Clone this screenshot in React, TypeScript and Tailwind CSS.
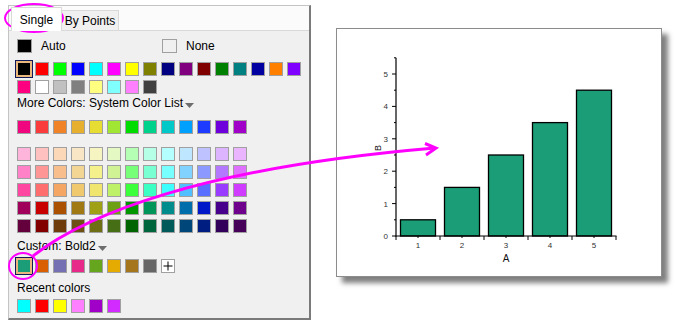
import React from 'react';

const row1 = ['#000000', '#ff0000', '#00ff00', '#0000ff', '#00ffff', '#ff00ff', '#ffff00', '#808000', '#000080', '#800080', '#800000', '#008000', '#008080', '#0000a0', '#ff8000', '#8000ff'];
const row2 = ['#ff0080', '#ffffff', '#c0c0c0', '#808080', '#ffff80', '#80ffff', '#ff80ff', '#404040'];
const systemRow = ['#f0077f', '#fa3c3c', '#f08228', '#e6af2d', '#e6dc32', '#a0e632', '#00dc00', '#00d28c', '#00c8c8', '#00a0ff', '#1e3cff', '#6e00dc', '#a000c8'];
const shades = [
  ['#ffb4dc', '#ffc0c0', '#fcd8b8', '#f8e6c4', '#f6f4c0', '#e4f8c4', '#b4ffb4', '#b4ffe6', '#b4ffff', '#bee6ff', '#bec3ff', '#dcb4ff', '#ebb4ff'],
  ['#ff82c8', '#ff9696', '#f8be8c', '#f4d694', '#f4f08c', '#d0f294', '#78ff78', '#78ffd2', '#78ffff', '#82d2ff', '#8c9aff', '#b478ff', '#e070ff'],
  ['#ff46a0', '#ff6e6e', '#f5a564', '#f0c86e', '#f0e66e', '#bef068', '#3cff3c', '#3cffc3', '#3cffff', '#50bfff', '#5a6eff', '#9a3cff', '#d03cff'],
  ['#a0005a', '#c80000', '#aa5000', '#a07814', '#a0a014', '#6ea014', '#009600', '#00965a', '#008c8c', '#006eaa', '#0019c8', '#46008c', '#6e008c'],
  ['#64003c', '#820000', '#6e3c0a', '#6e5014', '#6e6e14', '#466e14', '#006400', '#00643c', '#005a5a', '#004678', '#001e82', '#32005a', '#46005a'],
];
const bold2 = ['#1b9e77', '#d95f02', '#7570b3', '#e7298a', '#66a61e', '#e6ab02', '#a6761d', '#666666'];
const recent = ['#00ffff', '#ff0000', '#ffff00', '#ff80ff', '#a000c8', '#d22bff'];

const Swatch = ({ color, selected }: { color: string; selected?: boolean }) => (
  <div
    className={
      selected
        ? 'w-[14px] h-[14px] border border-[#eab77c] shadow-[0_0_0_1px_#eab77c,0_0_0_2px_#10195c]'
        : 'w-[14px] h-[14px] border border-[#a0a0a0]'
    }
    style={{ backgroundColor: color }}
  />
);

const SwatchRow = ({ colors, selectedIndex }: { colors: string[]; selectedIndex?: number }) => (
  <div className="flex gap-[4px]">
    {colors.map((c, i) => (
      <Swatch key={i} color={c} selected={i === selectedIndex} />
    ))}
  </div>
);

const DropArrow = () => (
  <svg width="9" height="5" viewBox="0 0 9 5" className="ml-[2px] mt-[4px]">
    <path d="M0 0 H9 L4.5 5 Z" fill="#6d6d6d" />
  </svg>
);

const Label = ({ text, arrow }: { text: string; arrow?: boolean }) => (
  <div className="flex items-center h-[18px] text-[12px] leading-[18px] text-black">
    <span>{text}</span>
    {arrow && <DropArrow />}
  </div>
);

const ColorPanel = () => (
  <div className="mt-[5px] ml-[8px] w-[303px] h-[315px] flex flex-col border-l border-t border-[#c4c4c4] border-r-2 border-b-2 border-r-[#7a7a7a] border-b-[#7a7a7a]">
    <div className="h-[24px] flex items-end pl-[2px] bg-[#fbfbfb] text-[12px] text-black">
      <div className="relative z-10 -mb-[1px] w-[51px] h-[24px] bg-white border border-b-0 border-[#d9d9d9] flex items-center justify-center">
        Single
      </div>
      <div className="w-[57px] h-[20px] bg-[#f0f0f0] border border-l-0 border-b-0 border-[#d9d9d9] flex items-center justify-center">
        By Points
      </div>
    </div>
    <div className="flex-1 border-t border-[#d9d9d9] bg-[#f0f0f0] pl-[8px] flex flex-col">
      <div className="mt-[8px] flex items-center h-[14px] text-[12px] text-black">
        <div className="w-[145px] flex items-center gap-[9px]">
          <div className="w-[15px] h-[14px] bg-black border border-[#a0a0a0]" />
          <span>Auto</span>
        </div>
        <div className="flex items-center gap-[9px]">
          <div className="w-[15px] h-[14px] border border-[#a0a0a0]" />
          <span>None</span>
        </div>
      </div>
      <div className="mt-[9px]">
        <SwatchRow colors={row1} selectedIndex={0} />
      </div>
      <div className="mt-[4px]">
        <SwatchRow colors={row2} />
      </div>
      <Label text="More Colors: System Color List" arrow />
      <div className="mt-[8px]">
        <SwatchRow colors={systemRow} />
      </div>
      <div className="mt-[13px] flex flex-col gap-[4px]">
        {shades.map((r, i) => (
          <SwatchRow key={i} colors={r} />
        ))}
      </div>
      <div className="mt-[4px]">
        <Label text="Custom: Bold2" arrow />
      </div>
      <div className="mt-[4px] flex gap-[4px]">
        {bold2.map((c, i) => (
          <Swatch key={i} color={c} selected={i === 0} />
        ))}
        <div className="w-[14px] h-[14px] bg-white border border-[#a0a0a0] flex items-center justify-center">
          <svg width="10" height="10" viewBox="0 0 10 10">
            <path d="M5 0.5 V9.5 M0.5 5 H9.5" stroke="#000" strokeWidth="1" />
          </svg>
        </div>
      </div>
      <div className="mt-[6px]">
        <Label text="Recent colors" />
      </div>
      <div className="mt-[2px]">
        <SwatchRow colors={recent} />
      </div>
    </div>
  </div>
);

const yOf = (v: number) => 207 - 32.4 * v;
const xOf = (v: number) => 59 + (v - 0.5) * 44;
const bars = [0.5, 1.5, 2.5, 3.5, 4.5];

const BarChart = () => (
  <div className="ml-[25px] mt-[28px] w-[326px] h-[249px] bg-white border border-[#8c8c8c] shadow-[6px_6px_5px_rgba(0,0,0,0.5)]">
    <svg width="324" height="247" viewBox="0 0 324 247" style={{ fontFamily: '"Liberation Sans", Arial, sans-serif' }}>
      {bars.map((v, i) => (
        <rect
          key={i}
          x={xOf(i + 1) - 17.5}
          y={yOf(v)}
          width={35}
          height={207 - yOf(v)}
          fill="#1b9e77"
          stroke="#000"
          strokeWidth="1.3"
        />
      ))}
      <line x1="59" y1={yOf(5.5)} x2="59" y2="207.5" stroke="#000" strokeWidth="1.2" />
      <line x1="58.5" y1="207" x2="279.5" y2="207" stroke="#000" strokeWidth="1.2" />
      {[0, 1, 2, 3, 4, 5].map((v) => (
        <g key={v}>
          <line x1="55" y1={yOf(v)} x2="59" y2={yOf(v)} stroke="#000" strokeWidth="1" />
          <text x="51" y={yOf(v) + 3} fontSize="8" fill="#333" textAnchor="end">
            {v}
          </text>
        </g>
      ))}
      {[0.5, 1.5, 2.5, 3.5, 4.5, 5.5].map((v) => (
        <line key={v} x1="57" y1={yOf(v)} x2="59" y2={yOf(v)} stroke="#000" strokeWidth="1" />
      ))}
      {[0.5, 1.5, 2.5, 3.5, 4.5, 5.5].map((v) => (
        <line key={v} x1={xOf(v)} y1="207" x2={xOf(v)} y2="211" stroke="#000" strokeWidth="1" />
      ))}
      {[1, 2, 3, 4, 5].map((v) => (
        <g key={v}>
          <line x1={xOf(v)} y1="207" x2={xOf(v)} y2="209" stroke="#000" strokeWidth="1" />
          <text x={xOf(v)} y="219" fontSize="8" fill="#333" textAnchor="middle">
            {v}
          </text>
        </g>
      ))}
      <text x={xOf(3)} y="233" fontSize="10" fill="#111" textAnchor="middle">
        A
      </text>
      <text x="44" y="119" fontSize="9" fill="#111" textAnchor="middle" transform="rotate(-90 44 119)">
        B
      </text>
    </svg>
  </div>
);

const Annotations = () => (
  <svg className="absolute inset-0 pointer-events-none" width="678" height="321" viewBox="0 0 678 321">
    <ellipse cx="34" cy="18" rx="29" ry="14" fill="none" stroke="#ff00ff" strokeWidth="2" />
    <ellipse cx="23" cy="266" rx="14" ry="13" fill="none" stroke="#ff00ff" strokeWidth="2" />
    <path d="M33 256 C85 215 200 168 435 148" fill="none" stroke="#ff00ff" strokeWidth="3" />
    <path d="M425 143.5 L436 148 L426 155" fill="none" stroke="#ff00ff" strokeWidth="3" strokeLinejoin="miter" />
  </svg>
);

const App = () => {
  return (
    <div
      className="relative w-[678px] h-[321px] bg-white flex items-start overflow-hidden"
      style={{ fontFamily: '"Liberation Sans", Arial, sans-serif' }}
    >
      <ColorPanel />
      <BarChart />
      <Annotations />
    </div>
  );
};

export default App;
